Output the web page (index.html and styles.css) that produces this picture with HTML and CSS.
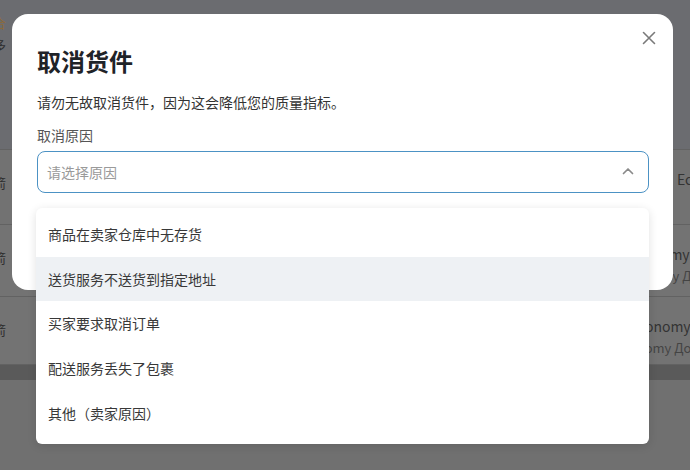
FILE: index.html
```html
<!DOCTYPE html>
<html lang="zh">
<head>
<meta charset="utf-8">
<link rel="stylesheet" href="styles.css">
</head>
<body>
<div class="page">
  <div class="row row-top">
    <div class="cell-left"><span class="orange">合</span><br><span>多</span></div>
    <div class="cell-right"></div>
  </div>
  <div class="row row-a">
    <div class="cell-left">箭</div>
    <div class="cell-right"><span class="r1 a1">Economy</span></div>
  </div>
  <div class="row row-b">
    <div class="cell-left">箭</div>
    <div class="cell-right"><span class="r1 b1">Economy</span><span class="r2 b2">Economy Доставка</span></div>
  </div>
  <div class="row row-c">
    <div class="cell-left">箭</div>
    <div class="cell-right"><span class="r1 c1">Economy</span><span class="r2 c2">Economy Доставка</span></div>
  </div>
  <div class="band"></div>
  <div class="rest"></div>
</div>

<div class="modal">
  <button class="close" aria-label="关闭">
    <svg width="14" height="14" viewBox="0 0 14 14"><path d="M1.5 1.5 L12.5 12.5 M12.5 1.5 L1.5 12.5" stroke="#7a7a7a" stroke-width="1.6" fill="none" stroke-linecap="round"/></svg>
  </button>
  <h1 class="title">取消货件</h1>
  <p class="desc">请勿无故取消货件，因为这会降低您的质量指标。</p>
  <div class="label">取消原因</div>
  <div class="select">
    <span class="placeholder">请选择原因</span>
    <svg class="chev" width="12" height="8" viewBox="0 0 12 8"><path d="M1.5 6.5 L6 2 L10.5 6.5" stroke="#8a8a8a" stroke-width="1.7" fill="none" stroke-linecap="round" stroke-linejoin="round"/></svg>
  </div>
</div>

<ul class="dropdown">
  <li class="opt">商品在卖家仓库中无存货</li>
  <li class="opt hover">送货服务不送货到指定地址</li>
  <li class="opt">买家要求取消订单</li>
  <li class="opt">配送服务丢失了包裹</li>
  <li class="opt">其他（卖家原因）</li>
</ul>
</body>
</html>
```

FILE: styles.css
```css
* { box-sizing: border-box; }
html, body {
  margin: 0;
  padding: 0;
  width: 690px;
  height: 470px;
  overflow: hidden;
}
body {
  font-family: "Noto Sans CJK SC", "Noto Sans", sans-serif;
  background: #707070;
  position: relative;
}
.page {
  display: flex;
  flex-direction: column;
  height: 470px;
  color: #2a2a2a;
  font-size: 13px;
}
.row {
  display: flex;
  justify-content: space-between;
  border-bottom: 1px solid #626262;
}
.row-top { height: 150px; background: #6b6c70; }
.row-a { height: 75px; background: #727272; }
.row-b { height: 72px; background: #737373; }
.row-c { height: 68px; background: #737373; }
.cell-left {
  margin-left: -7px;
  padding-top: 22px;
  line-height: 22px;
  color: #2e2e2e;
}
.row-top .cell-left { padding-top: 12px; }
.orange { color: #8a6a3a; }
.cell-right {
  width: 45px;
  overflow: hidden;
  white-space: nowrap;
  display: flex;
  flex-direction: column;
  padding-top: 18px;
  color: #333;
  line-height: 22px;
}
.cell-right .r1 { font-size: 14px; }
.cell-right .r2 { font-size: 13px; color: #444; }
.a1 { margin-left: 32px; }
.b1 { margin-left: -16px; }
.b2 { margin-left: -22px; }
.c1 { margin-left: -15px; }
.c2 { margin-left: -30px; }
.band { height: 15px; background: #5a5a5a; }
.rest { flex: 1; background: #707070; }

.modal {
  position: absolute;
  left: 12px;
  top: 14px;
  width: 661px;
  height: 276px;
  background: #fff;
  border-radius: 16px;
  padding: 30px 25px 0 25px;
}
.close {
  position: absolute;
  right: 14px;
  top: 14px;
  width: 20px;
  height: 20px;
  border: 0;
  background: none;
  padding: 3px;
  display: flex;
}
.title {
  margin: 0;
  font-size: 24px;
  font-weight: 700;
  line-height: 34px;
  color: #1f2328;
}
.desc {
  margin: 13px 0 0;
  font-size: 14px;
  line-height: 22px;
  color: #333;
}
.label {
  margin-top: 12px;
  font-size: 14px;
  line-height: 20px;
  color: #555;
}
.select {
  margin-top: 6px;
  height: 42px;
  width: 612px;
  border: 1.5px solid #4c92c4;
  border-radius: 8px;
  display: flex;
  align-items: center;
  justify-content: space-between;
  padding: 0 14px 0 9px;
}
.placeholder {
  font-size: 14px;
  color: #9a9a9a;
}
.chev { margin-top: -2px; }

.dropdown {
  position: absolute;
  left: 36px;
  top: 208px;
  width: 613px;
  height: 236px;
  margin: 0;
  padding: 4px 0 0;
  list-style: none;
  background: #fff;
  border-radius: 6px;
  box-shadow: 0 2px 10px rgba(0,0,0,0.12);
}
.opt {
  height: 44.6px;
  display: flex;
  align-items: center;
  padding-left: 12px;
  font-size: 14px;
  color: #383838;
}
.opt.hover { background: #eef1f4; }
```
